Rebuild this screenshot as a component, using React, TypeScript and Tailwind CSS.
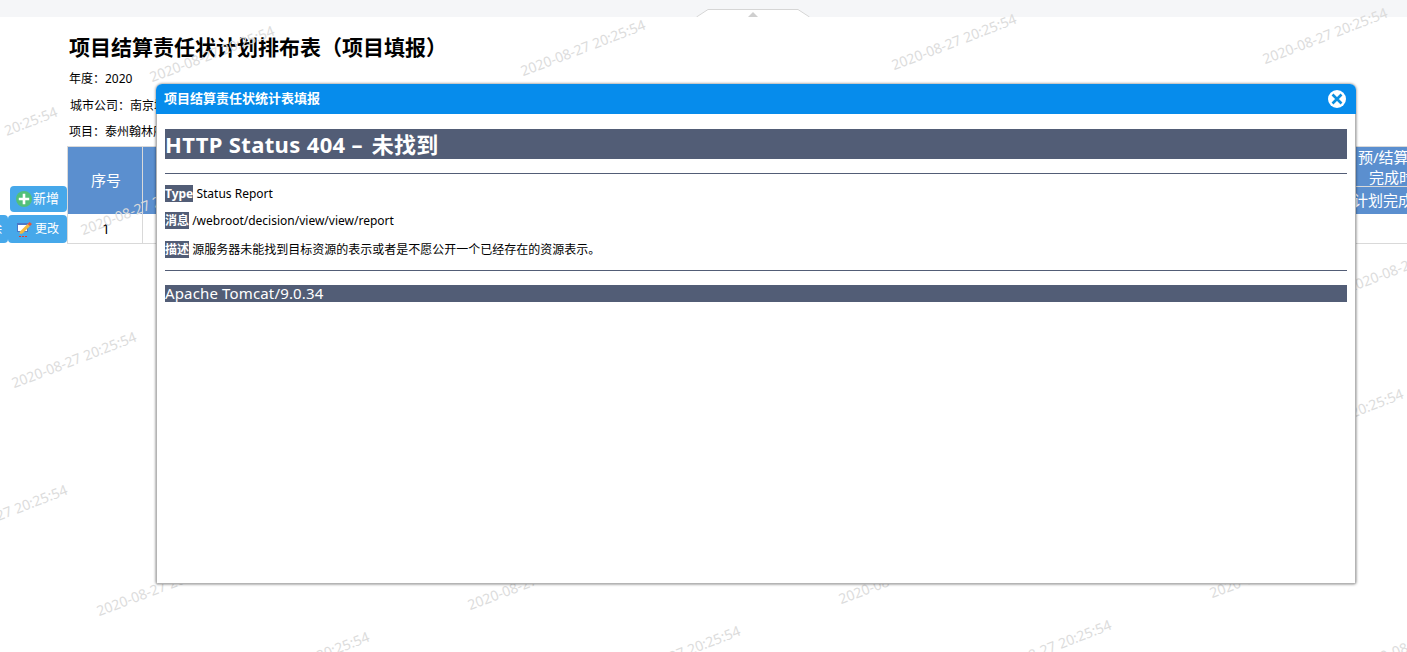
import React from "react";

const stamp = "2020-08-27 20:25:54";

// the watermark repeats on two offset lattices
const buildMarks = () => {
  const marks: { x: number; y: number }[] = [];
  [
    [212, 54],
    [-5, 135],
  ].forEach(([ox, oy]) => {
    for (let row = 0; row < 5; row++) {
      for (let col = 0; col < 5; col++) {
        marks.push({ x: ox + col * 371 - row * 69, y: oy - col * 6 + row * 153 });
      }
    }
  });
  return marks;
};

const Watermarks = () => (
  <div className="absolute inset-0 z-10 overflow-hidden pointer-events-none">
    {buildMarks().map((m) => (
      <span
        key={`${m.x}-${m.y}`}
        className="absolute w-[160px] -ml-[80px] -mt-[10px] h-[20px] leading-[20px] text-center text-[14px] whitespace-nowrap text-[#dcdcdc] -rotate-[21deg] font-['Noto_Sans',sans-serif]"
        style={{ left: m.x, top: m.y }}
      >
        {stamp}
      </span>
    ))}
  </div>
);

const PlusIcon = () => (
  <svg width="16" height="16" viewBox="0 0 16 16" className="shrink-0">
    <circle cx="8" cy="8" r="8" fill="#52c07a" />
    <path d="M8 2.800v10.400M2.800 8h10.400" stroke="#fff" strokeWidth="2.6" />
  </svg>
);

const EditIcon = () => (
  <svg width="15" height="16" viewBox="0 0 15 16" className="shrink-0">
    <rect x="0.500" y="2.500" width="10" height="8" fill="#fff" stroke="#4a78c8" />
    <path d="M0 2h11v2H0z" fill="#4a78c8" />
    <path d="M3 10.500L10.500 3l2.500 2-7.500 7.500-3 .5z" fill="#f5b93c" />
    <path d="M10.500 3L12.500 1 15 3l-2 2z" fill="#e8553a" />
    <path d="M2 15.500h8" stroke="#e23b2e" strokeDasharray="2 1" />
  </svg>
);

const CloseIcon = () => (
  <svg width="18" height="18" viewBox="0 0 18 18">
    <circle cx="9" cy="9" r="9" fill="#fff" />
    <path d="M4.500 4.500l9 9M13.500 4.500l-9 9" stroke="#0a8fe0" strokeWidth="2.600" />
  </svg>
);

const Notch = () => (
  <svg width="114" height="8" viewBox="0 0 114 8" className="block">
    <path d="M0.500 8L12 0.500h90L113.500 8" fill="#fff" stroke="#d6d6d6" />
    <path d="M52 8l5-5 5 5z" fill="#cfcfcf" />
  </svg>
);

const Label = ({ children }: { children: React.ReactNode }) => (
  <b className="bg-[#525d76] text-white font-bold">{children}</b>
);

function ErrorPage() {
  return (
    <div className="h-[470px] px-[8px] pt-[15px] border-x border-b border-[#b4b4b4] text-[12px] text-black font-['Noto_Sans','Noto_Sans_CJK_SC',sans-serif]">
      <h1 className="h-[30px] leading-[31px] bg-[#525d76] text-white text-[22px] font-bold tracking-[0.35px]">
        HTTP Status 404 <span className="tracking-[3px]">–</span> 未找到
      </h1>
      <div className="h-px mt-[14px] bg-[#525d76]" />
      <p className="mt-[13px] h-[14px] leading-[14px]">
        <Label>Type</Label> Status Report
      </p>
      <p className="mt-[13px] h-[14px] leading-[14px]">
        <Label>消息</Label> /webroot/decision/view/view/report
      </p>
      <p className="mt-[15px] h-[14px] leading-[14px]">
        <Label>描述</Label> 源服务器未能找到目标资源的表示或者是不愿公开一个已经存在的资源表示。
      </p>
      <div className="h-px mt-[13px] bg-[#525d76]" />
      <h3 className="h-[17px] mt-[14px] leading-[16px] bg-[#525d76] text-white text-[15px] tracking-[0.15px]">
        Apache Tomcat/9.0.34
      </h3>
    </div>
  );
}

export default function App() {
  return (
    <div className="relative w-[1407px] h-[652px] overflow-hidden bg-white font-['Noto_Sans','Noto_Sans_CJK_SC',sans-serif]">
      {/* collapse handle bar */}
      <div className="h-[17px] bg-[#f5f6f8] flex justify-center items-end pl-[99px]">
        <Notch />
      </div>

      <div className="pl-[69px] pt-[15px] text-[12px] text-black">
        <h2 className="h-[30px] leading-[30px] text-[21px] font-bold">项目结算责任状计划排布表（项目填报）</h2>
        <p className="mt-[9px] h-[16px] leading-[16px]">年度：2020</p>
        <p className="mt-[11px] h-[16px] leading-[16px] pl-px">城市公司：南京城市公司</p>
        <p className="mt-[10px] h-[16px] leading-[16px]">项目：泰州翰林府</p>
      </div>

      <div className="flex mt-[6px]">
        {/* toolbar sits left of the table */}
        <div className="w-[67px] shrink-0 flex flex-col items-end justify-end gap-[3px] pb-px text-[13px] text-white">
          <button className="w-[57px] h-[26px] flex items-center gap-px pl-[6px] bg-[#46a8ea] rounded-[4px]">
            <PlusIcon />
            新增
          </button>
          <div className="w-[67px] h-[28px] flex">
            <button className="w-[8px] overflow-hidden flex items-center justify-end pr-[6px] bg-[#46a8ea] rounded-r-[4px]">
              <span className="shrink-0">除</span>
            </button>
            <button className="flex-1 flex items-center gap-[3px] pl-[9px] text-[12px] bg-[#46a8ea] rounded-[4px]">
              <EditIcon />
              更改
            </button>
          </div>
        </div>

        <div className="w-[1340px] shrink-0">
          <div className="grid grid-cols-[76px_1fr_67px] h-[68px] text-white text-[15px] bg-[#5b8fcf] border-t border-[#d9d9d9]">
            <div className="flex items-center justify-center pl-[2px] border-x border-[#d9d9d9]">序号</div>
            <div className="border-r border-[#d9d9d9]" />
            <div className="flex flex-col overflow-hidden whitespace-nowrap">
              <div className="h-[40px] border-b border-[#d9d9d9] leading-[20px]">
                <div className="pl-[18px]">预/结算</div>
                <div className="pl-[29px]">完成时间</div>
              </div>
              <div className="flex-1 leading-[26px] pl-[13px]">计划完成时间</div>
            </div>
          </div>
          <div className="grid grid-cols-[76px_1fr] h-[30px] text-[14px] text-black border-b border-[#d9d9d9]">
            <div className="flex items-center justify-center pl-[2px] border-x border-[#d9d9d9]">1</div>
            <div />
          </div>
        </div>
      </div>

      <Watermarks />

      {/* report dialog */}
      <div className="absolute z-20 left-[156px] top-[84px] w-[1200px] h-[500px] bg-white rounded-t-[6px] rounded-b-[2px] shadow-[0_0_3px_rgba(0,0,0,0.6)] overflow-hidden">
        <div className="h-[30px] bg-[#068cec] flex items-center justify-between pl-[8px] pr-[10px] text-white text-[13px] font-bold">
          <span>项目结算责任状统计表填报</span>
          <CloseIcon />
        </div>
        <ErrorPage />
      </div>
    </div>
  );
}
